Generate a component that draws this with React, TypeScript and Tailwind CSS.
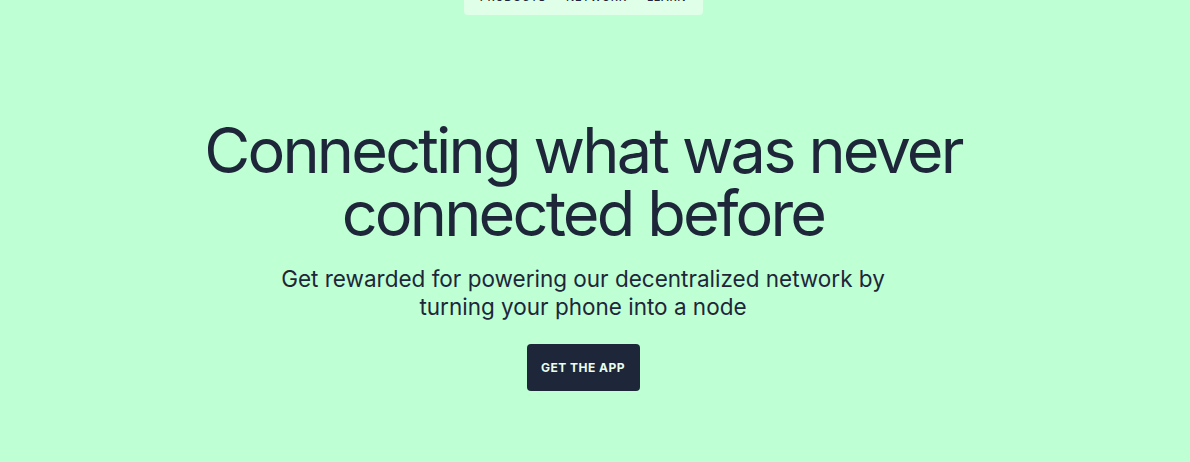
export default function App() {
  const links = ['PRODUCTS', 'NETWORK', 'LEARN'];
  return (
    <div className="flex h-[462px] w-full overflow-hidden bg-[#bfffd4] text-[#1e2639]" style={{ fontFamily: 'Inter, "Noto Sans", sans-serif' }}>
      <main className="flex w-[1166px] flex-col items-center">
        <nav className="-mt-[25px] flex h-[40px] w-[239px] items-end justify-center gap-[20px] rounded-b-[4px] bg-[#dfffe9] pb-[10px] text-[11px] font-medium leading-[16px] tracking-[0.06em]">
          {links.map((l) => (
            <span key={l}>{l}</span>
          ))}
        </nav>
        <h1 className="mt-[104px] text-center text-[63px] font-normal leading-[63px] tracking-[-0.045em]">
          Connecting what was never
          <br />
          connected before
        </h1>
        <p className="mt-[20px] text-center text-[22.5px] leading-[28px]">
          Get rewarded for powering our decentralized network by
          <br />
          turning your phone into a node
        </p>
        <button className="mt-[23px] h-[47px] w-[113px] rounded-[4px] bg-[#1e2639] text-[12px] font-bold tracking-[0.04em] text-[#e8fff0]">
          GET THE APP
        </button>
      </main>
    </div>
  );
}
